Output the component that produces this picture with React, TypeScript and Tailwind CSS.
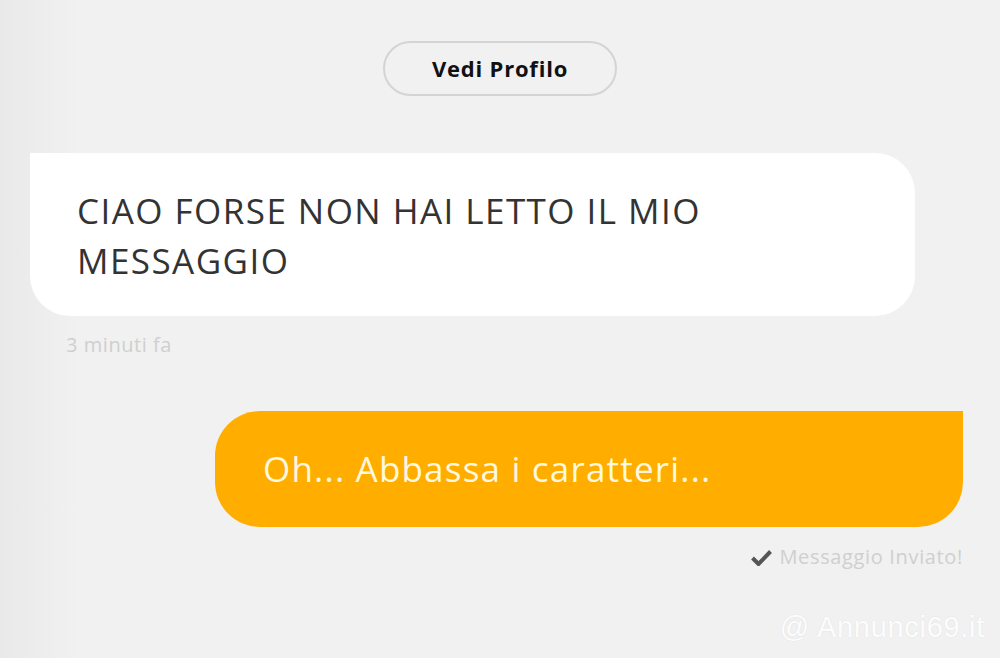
export default function App() {
  return (
    <div className="relative w-[1000px] h-[658px] overflow-hidden bg-gradient-to-r from-[#e9e9e9] via-[#f1f1f1] via-[8%] to-[#f1f1f1] font-['Open_Sans',sans-serif]">
      {/* Profile button */}
      <div className="flex justify-center pt-[41px]">
        <button className="w-[234px] h-[55px] rounded-full border-2 border-[#d4d4d4] bg-[#f1f1f1] text-[22px] tracking-[0.8px] font-bold text-[#111]">
          Vedi Profilo
        </button>
      </div>

      {/* Incoming message */}
      <div className="mt-[57px] ml-[30px] w-[885px] h-[163px] flex items-center pl-[47px] pr-6 bg-white rounded-tl-none rounded-tr-[40px] rounded-br-[40px] rounded-bl-[40px]">
        <p className="text-[35px] leading-[50px] tracking-[1.45px] text-[#333] pt-[2px]">
          CIAO FORSE NON HAI LETTO IL MIO
          <br />
          MESSAGGIO
        </p>
      </div>
      <div className="ml-[66px] mt-[15px] text-[20px] leading-[28px] tracking-[0.55px] text-[#cfcfcf]">3 minuti fa</div>

      {/* Outgoing message */}
      <div className="flex justify-end pr-[37px] mt-[52px]">
        <div className="w-[748px] h-[116px] flex items-center pl-[48px] bg-[#ffae00] rounded-tl-[45px] rounded-tr-none rounded-br-[45px] rounded-bl-[45px]">
          <p className="text-[35px] leading-[44px] tracking-[1.2px] text-[#fff8de]">Oh... Abbassa i caratteri...</p>
        </div>
      </div>
      <div className="flex justify-end items-center gap-[7px] pr-[37px] mt-[16px] text-[20px] leading-[28px] tracking-[0.65px] text-[#cfcfcf]">
        <svg width="21" height="17" viewBox="0 0 21 17">
          <path d="M1.5 9 L7.5 15 L19.5 2.5" fill="none" stroke="#555" strokeWidth="4" strokeLinejoin="miter" />
        </svg>
        <span>Messaggio Inviato!</span>
      </div>

      {/* Watermark */}
      <div className="absolute right-[15px] top-[609px] text-[29px] leading-[36px] tracking-[0.7px] text-white/90 font-['Liberation_Sans',Arial,sans-serif] [text-shadow:0_0_2px_rgba(0,0,0,0.08)]">
        @ Annunci69.it
      </div>
    </div>
  );
}
